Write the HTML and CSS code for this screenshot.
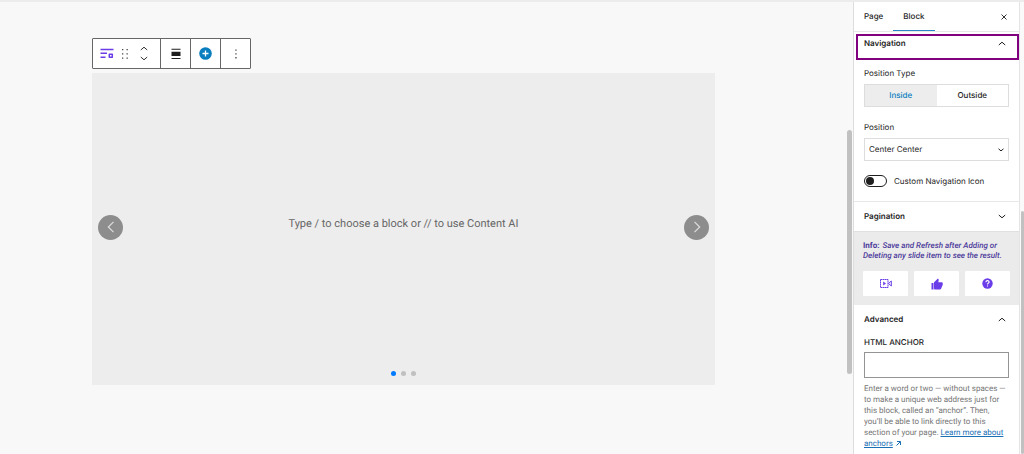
FILE: index.html
```html
<!DOCTYPE html>
<html lang="en">
<head>
    <meta charset="UTF-8">
    <meta name="viewport" content="width=device-width, initial-scale=1.0">
    <title>Edit Page - Slider Block</title>
    <link rel="stylesheet" href="styles.css">
</head>
<body>
    <div class="editor">
        <main class="canvas">
            <div class="block-toolbar" role="toolbar" aria-label="Block tools">
                <div class="toolbar-group">
                    <button class="tool tool-block" aria-label="Slider">
                        <svg width="14" height="11" viewBox="0 0 14 11" fill="none" stroke="#6a3de8" stroke-width="1.5">
                            <path d="M0.500 1.500H13.500M0.500 5.300H7M0.500 9.200H5.500"/>
                            <path d="M9.300 6.200H12.300V9.200H9.300z" stroke-width="1.500" stroke-linejoin="round"/>
                        </svg>
                    </button>
                    <button class="tool tool-drag" aria-label="Drag">
                        <svg width="6" height="10" viewBox="0 0 6 10" fill="#444">
                            <path d="M0 0h1.300v1.300H0zM4.500 0H5.800v1.300H4.500zM0 4.200h1.300v1.300H0zM4.500 4.200H5.800v1.300H4.500zM0 8.400h1.300v1.300H0zM4.500 8.400H5.800v1.300H4.500z"/>
                        </svg>
                    </button>
                    <div class="movers">
                        <button class="mover" aria-label="Move up">
                            <svg width="8" height="5" viewBox="0 0 8 5" fill="none" stroke="#333"><path d="M0.800 4L4 1.200L7.200 4"/></svg>
                        </button>
                        <button class="mover" aria-label="Move down">
                            <svg width="8" height="5" viewBox="0 0 8 5" fill="none" stroke="#333"><path d="M0.800 1L4 3.800L7.200 1"/></svg>
                        </button>
                    </div>
                </div>
                <div class="toolbar-group">
                    <button class="tool" aria-label="Align">
                        <svg width="10" height="12" viewBox="0 0 10 12" fill="#1e1e1e">
                            <path d="M0.500 0.800H9.500V1.800H0.500zM0.500 3.800H9.500V8H0.500zM0.500 10H9.500V11H0.500z"/>
                        </svg>
                    </button>
                </div>
                <div class="toolbar-group">
                    <button class="tool" aria-label="Add slide">
                        <svg width="13" height="13" viewBox="0 0 13 13">
                            <circle cx="6.500" cy="6.500" r="6.300" fill="#0b7ebf"/>
                            <path d="M6.500 3.500V9.500M3.500 6.500H9.500" stroke="#fff" stroke-width="1.300"/>
                        </svg>
                    </button>
                </div>
                <div class="toolbar-group">
                    <button class="tool" aria-label="Options">
                        <svg width="2" height="10" viewBox="0 0 2 10" fill="#444">
                            <path d="M0.300 0.500h1.300v1.300H0.300zM0.300 4.300h1.300v1.300H0.300zM0.300 8.100h1.300v1.300H0.300z"/>
                        </svg>
                    </button>
                </div>
            </div>

            <section class="slider">
                <button class="arrow" aria-label="Previous slide">
                    <svg width="8" height="12" viewBox="0 0 8 12" fill="none" stroke="#ddd" stroke-width="1.200"><path d="M6.500 0.800L1.300 6L6.500 11.200"/></svg>
                </button>
                <p class="placeholder">Type / to choose a block or // to use Content AI</p>
                <button class="arrow" aria-label="Next slide">
                    <svg width="8" height="12" viewBox="0 0 8 12" fill="none" stroke="#ddd" stroke-width="1.200"><path d="M1.500 0.800L6.700 6L1.500 11.200"/></svg>
                </button>
                <div class="dots">
                    <span class="dot active"></span>
                    <span class="dot"></span>
                    <span class="dot"></span>
                </div>
            </section>
            <div class="scroll-thumb canvas-thumb"></div>
        </main>

        <aside class="sidebar">
            <header class="tabs">
                <button class="tab">Page</button>
                <button class="tab active">Block</button>
                <button class="close" aria-label="Close settings">
                    <svg width="6" height="6" viewBox="0 0 6 6" stroke="#1e1e1e" stroke-width="0.900"><path d="M0.500 0.500L5.500 5.500M5.500 0.500L0.500 5.500"/></svg>
                </button>
            </header>

            <section class="panel navigation">
                <button class="panel-title">
                    Navigation
                    <svg width="8" height="5" viewBox="0 0 8 5" fill="none" stroke="#1e1e1e"><path d="M0.800 4L4 1.200L7.200 4"/></svg>
                </button>
                <div class="highlight"></div>
                <div class="label">Position Type</div>
                <div class="button-group">
                    <button class="choice selected">Inside</button>
                    <button class="choice">Outside</button>
                </div>
                <label class="label" for="position">Position</label>
                <div class="select-wrap">
                    <select id="position">
                        <option>Center Center</option>
                    </select>
                    <svg width="6" height="4" viewBox="0 0 6 4" fill="none" stroke="#1e1e1e"><path d="M0.500 0.800L3 2.900L5.500 0.800"/></svg>
                </div>
                <label class="toggle-row">
                    <input type="checkbox" class="toggle">
                    Custom Navigation Icon
                </label>
            </section>

            <section class="panel">
                <button class="panel-title">
                    Pagination
                    <svg width="8" height="5" viewBox="0 0 8 5" fill="none" stroke="#1e1e1e"><path d="M0.800 1L4 3.800L7.200 1"/></svg>
                </button>
            </section>

            <section class="info">
                <p><strong>Info:</strong> Save and Refresh after Adding or Deleting any slide item to see the result.</p>
                <div class="info-links">
                    <a href="#" aria-label="Video tutorial">
                        <svg width="12" height="9" viewBox="0 0 12 9" fill="none" stroke="#6a3de8">
                            <path d="M0.500 0.500H8V8.500H0.500z" stroke-dasharray="1.800 0.300"/>
                            <path d="M8.500 4.500L11.300 2V7z"/>
                            <path d="M3.200 2.500V6.500L6 4.500z" fill="#6a3de8" stroke="none"/>
                        </svg>
                    </a>
                    <a href="#" aria-label="Rate this plugin">
                        <svg width="12" height="12" viewBox="0 0 24 24" fill="#6a3de8">
                            <path d="M1 23h4V10H1v13zM23.500 11c0-1.300-1-2.300-2.300-2.300H14.500l1-4.700v-0.400c0-.5-.2-.9-.5-1.200L13.800 1 6.700 8.200C6.200 8.600 6 9.200 6 9.800V20.500C6 22 7 23 8.300 23h9.700c1 0 1.800-.6 2.100-1.400l3.200-7.700c.1-.3.200-.6.200-.9z"/>
                        </svg>
                    </a>
                    <a href="#" aria-label="Help">
                        <svg width="11" height="11" viewBox="0 0 11 11">
                            <circle cx="5.500" cy="5.500" r="5.200" fill="#6a3de8"/>
                            <path d="M3.900 4.300C3.900 2.100 7.200 2.200 7.100 4.100C7 5.200 5.500 5.200 5.500 6.500M5.500 7.500V8.600" fill="none" stroke="#fff" stroke-width="1.100"/>
                        </svg>
                    </a>
                </div>
            </section>

            <section class="panel">
                <button class="panel-title">
                    Advanced
                    <svg width="8" height="5" viewBox="0 0 8 5" fill="none" stroke="#1e1e1e"><path d="M0.800 4L4 1.200L7.200 4"/></svg>
                </button>
                <label class="label label-caps" for="anchor">HTML Anchor</label>
                <input type="text" id="anchor" class="text-input">
                <p class="help">
                    Enter a word or two — without spaces — to make a unique web address just for this block, called an “anchor”. Then, you’ll be able to link directly to this section of your page. <a href="#">Learn more about anchors</a>
                    <svg width="5" height="5" viewBox="0 0 5 5" fill="none" stroke="#1b6fb5"><path d="M0.500 4.500L4.300 0.700M1 0.500H4.500V4"/></svg>
                </p>
            </section>
        </aside>

        <div class="page-scroll">
            <div class="scroll-thumb page-thumb"></div>
        </div>
    </div>
</body>
</html>
```
FILE: styles.css
```css
* {
    margin: 0;
    padding: 0;
    box-sizing: border-box;
}

body {
    font-family: Inter, "Liberation Sans", sans-serif;
    font-size: 8px;
    line-height: 11px;
    text-rendering: geometricPrecision;
    color: #1e1e1e;
    background: #f8f8f8;
    overflow: hidden;
}

button,
input,
select {
    font: inherit;
    color: inherit;
    text-rendering: inherit;
    background: none;
    border: none;
}

button {
    cursor: pointer;
}

svg {
    display: block;
    flex: none;
}

.editor {
    display: flex;
    height: 100vh;
    border-top: 2px solid #ececec;
}

/* Canvas */
.canvas {
    position: relative;
    flex: 1;
    padding: 36px 138px 0 92px;
}

.block-toolbar {
    display: inline-flex;
    height: 31px;
    background: #fff;
    border: 1px solid #666;
    border-radius: 1px;
    vertical-align: top;
}

.toolbar-group {
    display: flex;
    align-items: center;
    justify-content: center;
    min-width: 30px;
}

.toolbar-group + .toolbar-group {
    border-left: 1px solid #666;
}

.tool {
    display: flex;
    align-items: center;
    justify-content: center;
}

.tool-block {
    padding: 0 8px 0 7px;
}

.movers {
    display: flex;
    flex-direction: column;
    gap: 5px;
    padding: 0 12px;
}

.mover {
    display: block;
}

.slider {
    position: relative;
    display: flex;
    align-items: center;
    justify-content: space-between;
    height: 312px;
    margin-top: 4px;
    padding: 0 6px 4px;
    background: #ededed;
}

.arrow {
    display: flex;
    align-items: center;
    justify-content: center;
    width: 25px;
    height: 25px;
    border-radius: 50%;
    background: #8d8d8d;
}

.placeholder {
    padding-bottom: 6px;
    font-family: Roboto, "Liberation Sans", sans-serif;
    font-size: 11px;
    line-height: 16px;
    color: #666;
}

.dots {
    position: absolute;
    left: 0;
    right: 0;
    bottom: 9px;
    display: flex;
    justify-content: center;
    gap: 5px;
}

.dot {
    width: 5px;
    height: 5px;
    border-radius: 50%;
    background: #c0c0c0;
}

.dot.active {
    background: #007aff;
}

.scroll-thumb {
    background: #c1c1c1;
    border-radius: 3px;
}

.canvas-thumb {
    position: absolute;
    top: 128px;
    right: 1px;
    width: 5px;
    height: 244px;
}

/* Settings sidebar */
.sidebar {
    flex: none;
    width: 167px;
    background: #fff;
    border-left: 1px solid #ddd;
    border-right: 1px solid #e4e4e4;
    overflow: hidden;
}

.tabs {
    display: flex;
    align-items: stretch;
    height: 30px;
    border-bottom: 1px solid #e8e8e8;
}

.tab {
    padding: 0 10px;
    font-weight: 500;
}

.tab.active {
    border-bottom: 1px solid #2b86c9;
}

.close {
    margin-left: auto;
    padding: 0 12px;
}

.panel {
    position: relative;
    padding: 0 10px;
}

.navigation {
    padding-bottom: 14px;
    border-bottom: 1px solid #e8e8e8;
}

.panel-title {
    display: flex;
    align-items: center;
    justify-content: space-between;
    width: 100%;
    height: 29px;
    padding-right: 3px;
    font-weight: 600;
}

.navigation .panel-title {
    height: 23px;
}

.highlight {
    position: absolute;
    top: 2px;
    left: 2px;
    right: 0;
    height: 26px;
    border: 2px solid #800080;
    pointer-events: none;
}

.label {
    display: block;
}

.navigation .label {
    margin: 13px 0 5px;
}

.navigation .button-group + .label {
    margin-top: 15px;
}

.button-group {
    display: flex;
    height: 23px;
    border: 1px solid #ddd;
}

.choice {
    flex: 1;
    font-weight: 500;
}

.choice.selected {
    color: #0b7ebf;
    background: #ededed;
}

.select-wrap {
    position: relative;
}

.select-wrap select {
    display: block;
    width: 100%;
    height: 23px;
    padding-left: 4px;
    border: 1px solid #ddd;
    appearance: none;
}

.select-wrap svg {
    position: absolute;
    top: 10px;
    right: 5px;
    pointer-events: none;
}

.toggle-row {
    display: flex;
    align-items: center;
    gap: 7px;
    margin-top: 14px;
}

.toggle {
    display: flex;
    align-items: center;
    width: 23px;
    height: 12px;
    padding-left: 1px;
    border: 1px solid #1e1e1e;
    border-radius: 6px;
    appearance: none;
}

.toggle::before {
    content: "";
    width: 8px;
    height: 8px;
    border-radius: 50%;
    background: #1e1e1e;
}

.toggle:checked {
    justify-content: flex-end;
}

.info {
    padding: 9px;
    background: #ebebeb;
    border-top: 1px solid #e0e0e0;
}

.info p {
    font-family: Roboto, "Liberation Sans", sans-serif;
    font-style: italic;
    font-weight: 500;
    line-height: 10px;
    color: #4b3a9b;
}

.info strong {
    margin-right: 1px;
    font-style: normal;
    font-weight: 700;
}

.info-links {
    display: flex;
    gap: 6px;
    margin-top: 10px;
}

.info-links a {
    display: flex;
    flex: 1;
    align-items: center;
    justify-content: center;
    height: 25px;
    background: #fff;
    border-radius: 1px;
}

.label-caps {
    margin: 3px 0 4px;
    font-weight: 500;
    text-transform: uppercase;
}

.text-input {
    display: block;
    width: 100%;
    height: 26px;
    padding: 0 4px;
    border: 1px solid #949494;
}

.help {
    margin-top: 5px;
    font-family: Roboto, "Liberation Sans", sans-serif;
    color: #757575;
}

.help a {
    color: #1b6fb5;
}

.help svg {
    display: inline-block;
    margin-left: 1px;
}

/* Outer scrollbar */
.page-scroll {
    flex: none;
    width: 4px;
    padding-top: 209px;
    background: #fafafa;
}

.page-thumb {
    width: 3px;
    height: 100%;
    margin-left: auto;
}
```
